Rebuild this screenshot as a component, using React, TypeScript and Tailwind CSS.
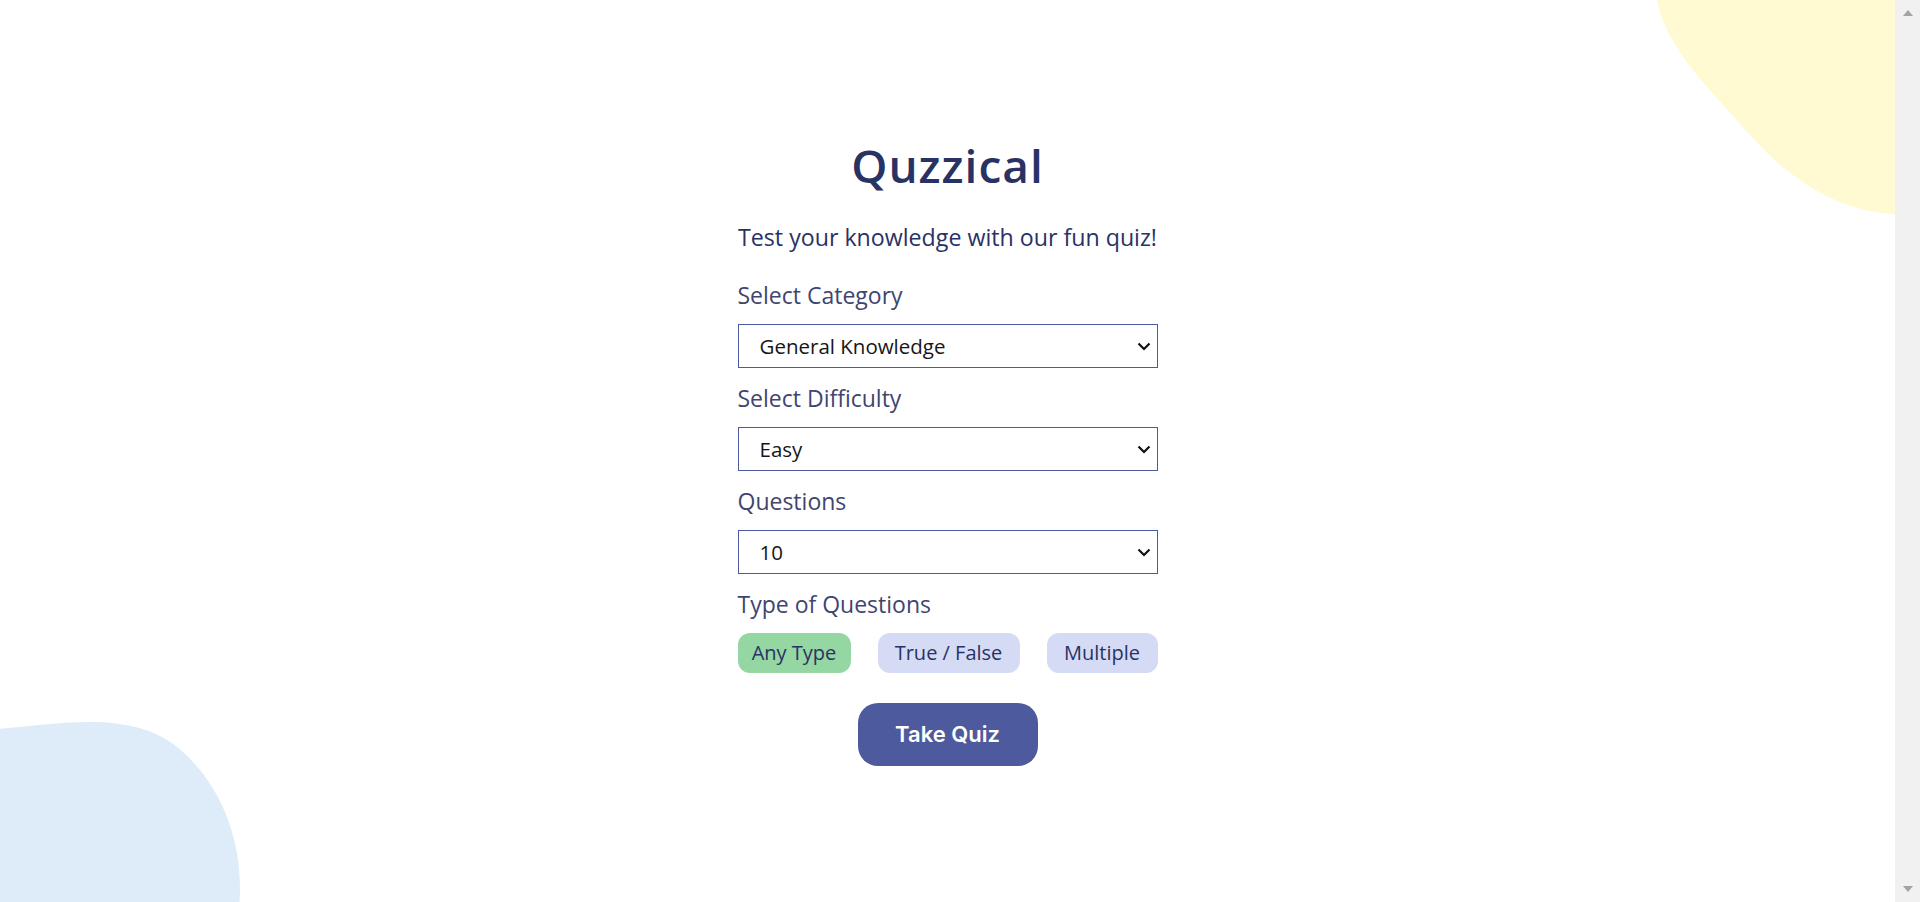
import { useState } from "react";

const categories = [
  "General Knowledge",
  "Books",
  "Film",
  "Music",
  "Science & Nature",
  "Computers",
  "Sports",
  "Geography",
  "History",
];

const difficulties = ["Easy", "Medium", "Hard"];
const amounts = ["5", "10", "15", "20"];
const types = [
  { label: "Any Type", width: "w-[113px]" },
  { label: "True / False", width: "w-[142px]" },
  { label: "Multiple", width: "w-[111px]" },
];

function YellowBlob() {
  return (
    <svg
      className="pointer-events-none absolute right-0 top-0 h-[234px] w-[242px]"
      viewBox="0 0 158 141"
      preserveAspectRatio="none"
      fill="none"
    >
      <path
        fillRule="evenodd"
        clipRule="evenodd"
        d="M63.4095 81.3947C35.1213 50.8508 -2.68211 21.7816 1.17274 -19.6933C5.43941 -65.599 39.854 -105.359 82.4191 -123.133C122.797 -139.994 170.035 -130.256 205.822 -105.149C235.947 -84.0141 236.823 -42.8756 246.838 -7.27104C256.876 28.4129 282.478 68.1908 260.262 97.8565C237.908 127.707 193.011 130.124 155.67 128.851C121.453 127.685 86.6725 106.514 63.4095 81.3947Z"
        fill="#FFFAD1"
      />
    </svg>
  );
}

function BlueBlob() {
  return (
    <svg
      className="pointer-events-none absolute bottom-0 left-0 h-[180px] w-[240px]"
      viewBox="0 0 148 118"
      preserveAspectRatio="none"
      fill="none"
    >
      <path
        fillRule="evenodd"
        clipRule="evenodd"
        d="M-5.55191 4.90596C35.9614 1.77498 82.2425 -9.72149 112.306 19.1094C145.581 51.0203 155.282 102.703 142.701 147.081C130.767 189.18 93.7448 220.092 51.8208 232.476C16.5281 242.902 -15.4332 218.605 -49.1007 203.738C-85.3375 187.737 -133.641 182.993 -145.741 145.239C-158.358 105.868 -132.269 64.5881 -103.064 35.3528C-77.7328 9.99541 -41.2727 7.60006 -5.55191 4.90596Z"
        fill="#DEEBF8"
      />
    </svg>
  );
}

// the browser's empty scroll track down the right edge
function ScrollTrack() {
  return (
    <div className="flex w-[25px] shrink-0 flex-col items-center justify-between bg-[#f1f1f1] py-[10px]">
      <svg width="10" height="6" viewBox="0 0 10 6">
        <polygon points="5,0 10,6 0,6" fill="#a3a3a3" />
      </svg>
      <svg width="10" height="6" viewBox="0 0 10 6">
        <polygon points="0,0 10,0 5,6" fill="#a3a3a3" />
      </svg>
    </div>
  );
}

function Field({
  label,
  value,
  options,
  onChange,
}: {
  label: string;
  value: string;
  options: string[];
  onChange: (v: string) => void;
}) {
  return (
    <div className="flex flex-col">
      <label className="text-[23px] leading-[28px] text-[#3f4570]">{label}</label>
      <div className="relative mt-[15px]">
        <select
          value={value}
          onChange={(e) => onChange(e.target.value)}
          className="h-[44px] w-full appearance-none border border-[#4D5B9E] bg-white px-[21px] text-[20.5px] text-[#161616]"
        >
          {options.map((o) => (
            <option key={o} value={o}>
              {o}
            </option>
          ))}
        </select>
        <svg
          className="pointer-events-none absolute right-[7px] top-[18px]"
          width="14"
          height="9"
          viewBox="0 0 14 9"
          fill="none"
        >
          <polyline points="1.5,1.5 7,7 12.5,1.5" stroke="#111" strokeWidth="2.2" />
        </svg>
      </div>
    </div>
  );
}

export default function App() {
  const [category, setCategory] = useState(categories[0]);
  const [difficulty, setDifficulty] = useState(difficulties[0]);
  const [amount, setAmount] = useState("10");
  const [type, setType] = useState(types[0].label);

  return (
    <div className="flex h-screen overflow-hidden bg-white font-['Open_Sans',sans-serif]">
      <div className="relative flex-1 overflow-hidden">
        <YellowBlob />
        <BlueBlob />
        <main className="relative flex flex-col items-center pt-[137px]">
          <h1 className="text-[46px] font-semibold leading-[56px] tracking-[1px] text-[#293264]">
            Quzzical
          </h1>
          <p className="mt-[30px] text-[23.2px] leading-[28px] text-[#293264]">
            Test your knowledge with our fun quiz!
          </p>
          <div className="mt-[30px] flex w-[420px] flex-col gap-[16px]">
            <Field label="Select Category" value={category} options={categories} onChange={setCategory} />
            <Field label="Select Difficulty" value={difficulty} options={difficulties} onChange={setDifficulty} />
            <Field label="Questions" value={amount} options={amounts} onChange={setAmount} />
            <div className="flex flex-col">
              <span className="text-[23px] leading-[28px] text-[#3f4570]">Type of Questions</span>
              <div className="mt-[15px] flex justify-between">
                {types.map((t) => (
                  <button
                    key={t.label}
                    onClick={() => setType(t.label)}
                    className={`h-[40px] ${t.width} rounded-[12px] text-[20px] text-[#293264] ${
                      type === t.label ? "bg-[#94D7A2]" : "bg-[#D6DBF5]"
                    }`}
                  >
                    {t.label}
                  </button>
                ))}
              </div>
            </div>
          </div>
          <button className="mt-[30px] h-[63px] w-[180px] rounded-[20px] bg-[#4D5B9E] font-['Inter',sans-serif] text-[22px] font-semibold text-white">
            Take Quiz
          </button>
        </main>
      </div>
      <ScrollTrack />
    </div>
  );
}
